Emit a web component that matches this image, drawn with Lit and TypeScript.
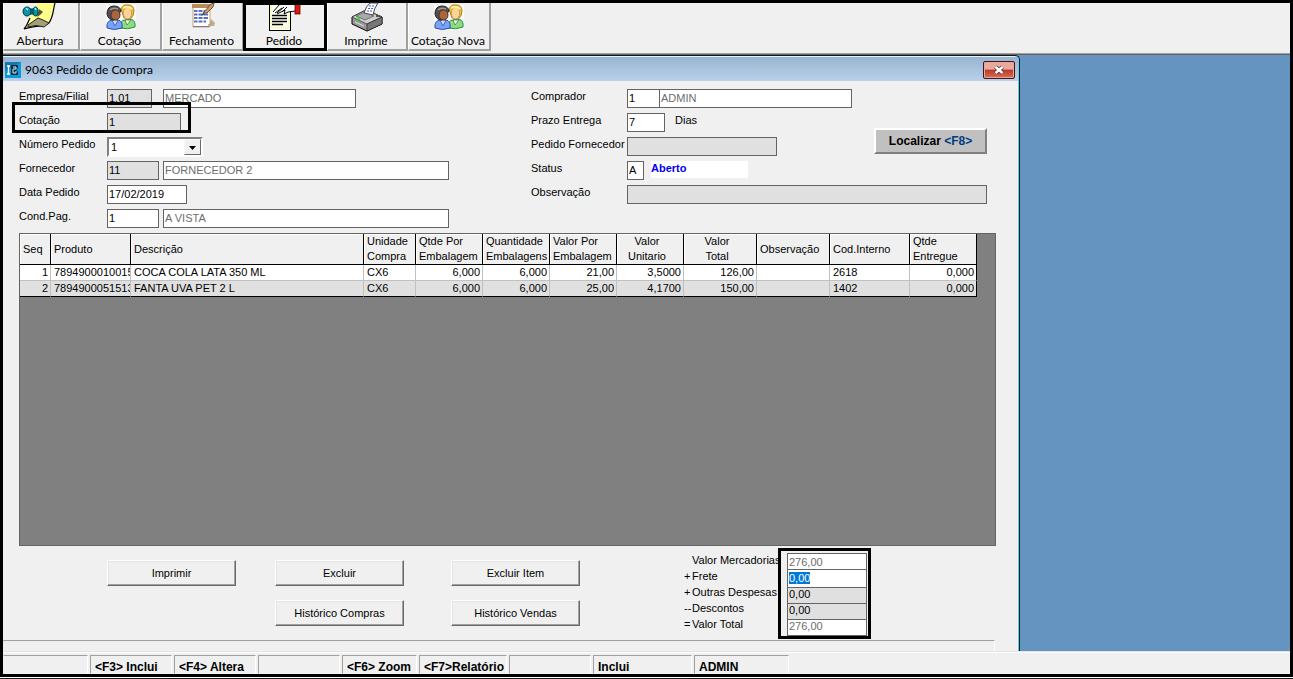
import { LitElement, html, css, svg, nothing } from "lit";
import { customElement, query } from "lit/decorators.js";
import { classMap } from "lit/directives/class-map.js";
import { styleMap } from "lit/directives/style-map.js";

const noteIcon = svg`
  <path d="M14 0H33C31 6 32 12 27 20C24 24 14 22 2 26C5 23 6 19 8 15C11 11 13 7 14 0Z" fill="#ffff8c"/>
  <path d="M33 0C31 6 32 12 27 20C24 24 14 22 2 26C5 23 6 19 8 15" fill="none" stroke="#000" stroke-width="1.2"/>
  <path d="M6 22L16 15L21 17L27 20L22 24Q14 21 6 24Z" fill="#a3a077" stroke="#222" stroke-width="1"/>
  <path d="M17 6l4 3l-3 3l-3 2z" fill="#55553c"/>
  <rect x="6" y="6" width="8" height="5" fill="#008b9a" stroke="#00303c"/>
  <ellipse cx="5" cy="8.500" rx="4" ry="4.500" fill="#0a93a3" stroke="#00303c"/>
  <ellipse cx="13.500" cy="8.500" rx="2.500" ry="4.500" fill="#0a93a3" stroke="#00303c"/>
  <path d="M4 5l2 2M13 5l1 2" stroke="#8ff" stroke-width="1.500"/>`;

const peopleIcon = svg`
  <rect x="0" y="2" width="30" height="25" fill="#fff" opacity=".7"/>
  <path d="M14 25Q14 17 19 17L25 16Q30 18 29 24Q22 27 14 25Z" fill="#8edb84" stroke="#2d8b35"/>
  <path d="M19 17l2 5l4-5z" fill="#fff" stroke="#2d8b35" stroke-width=".8"/>
  <path d="M15 6Q17 1 22 2Q28 2 28 8Q28 13 25 15H18Z" fill="#e8c53f" stroke="#b07c1c"/>
  <ellipse cx="21.500" cy="10" rx="4.200" ry="6" fill="#fbd39b" stroke="#cc8c3c" stroke-width=".8"/>
  <path d="M17 5Q22 2 26 6" stroke="#fff19a" stroke-width="2" fill="none"/>
  <path d="M1 25Q0 18 6 17H12Q17 18 16 25Q8 28 1 25Z" fill="#7aa3f5" stroke="#274fb8"/>
  <path d="M6 17l3 6l3-6z" fill="#cfe4ff" stroke="#274fb8" stroke-width=".8"/>
  <path d="M1 11Q1 3 8 3Q14 3 15 8L8 17Q2 17 1 11Z" fill="#4f4f55" stroke="#222"/>
  <ellipse cx="9.500" cy="12" rx="4.500" ry="5" fill="#a8663b" stroke="#5c2f1a"/>
  <path d="M4 7Q7 4 12 6" stroke="#999" stroke-width="1.500" fill="none"/>`;

const checklistIcon = svg`
  <path d="M20 16l4 4l-1 3h-5z" fill="#b6b083"/>
  <path d="M2 3H19V24H2Z" fill="#fff" stroke="#c9a36a"/>
  <rect x="1" y="1" width="18" height="4" fill="#b88d58"/>
  <path d="M3 8H17M3 11.500H17M3 15H17M3 18.500H15" stroke="#5570c4" stroke-width="2"/>
  <path d="M7 6V21M12 6V21" stroke="#fff"/>
  <path d="M2 23.500H18V21" stroke="#7b7b9d" fill="none"/>
  <path d="M12 10L20 1l3-1l-1 4l-6 6z" fill="#c59b6a" stroke="#6b4a28" stroke-width=".9"/>
  <path d="M12 10l-2 3l4-2z" fill="#333"/>`;

const orderIcon = svg`
  <rect x=".5" y=".5" width="21" height="27" fill="#fffff0" stroke="#000"/>
  <path d="M2 2V26M4 25H20M20 12V25" stroke="#f3ee58" stroke-dasharray="1 1"/>
  <path d="M3 12.500H18M3 15.500H18M3 18.500H18M3 21.500H14" stroke="#000" stroke-width="1.500"/>
  <path d="M4 9L11 1L16 0H26V8L19 9L15 11L16 7L8 11L13 5L6 10Z" fill="#fff"/>
  <path d="M4 9L11 1M6 10L13 5M8 11L16 7L15 11L19 9L26 8M8 10l7-6M13 9l5-5" fill="none" stroke="#000"/>
  <rect x="26" y="1" width="5" height="10" fill="#e01414" stroke="#600" stroke-width=".8"/>`;

const printerIcon = svg`
  <path d="M1 14L15 7L31 14V21L16 28L1 21Z" fill="#989898" stroke="#000"/>
  <path d="M1 14L15 7L31 14L16 21Z" fill="#cfcfcf" stroke="#333" stroke-width=".7"/>
  <path d="M16 21V28L31 21V14Z" fill="#777" stroke="#222" stroke-width=".7"/>
  <path d="M5 13L14 9L23 13L14 17Z" fill="#aaa" stroke="#555" stroke-width=".7"/>
  <path d="M13 10Q15 3 19 0H27Q23 5 22 12Z" fill="#fff" stroke="#445"/>
  <path d="M18 3h5M17 5.500h5M16 8h5" stroke="#4b62dd" stroke-width="1.200" stroke-dasharray="2 1"/>
  <path d="M6 15l3 1.500" stroke="#2e2" stroke-width="2"/>
  <path d="M4 19l9 4" stroke="#ddd"/>
  <path d="M25 13h4" stroke="#555" stroke-width="2"/>`;

const tools = [
  { text: "Abertura", width: 77, icon: noteIcon, viewBox: "1 0 34 28" },
  { text: "Cotação", width: 82, icon: peopleIcon, viewBox: "-3 0 34 28" },
  { text: "Fechamento", width: 82, icon: checklistIcon, viewBox: "-6 0 34 28" },
  { text: "Pedido", width: 83, icon: orderIcon, viewBox: "-2 0 34 28", marked: true },
  { text: "Imprime", width: 81, icon: printerIcon, viewBox: "-2 0 34 28" },
  { text: "Cotação Nova", width: 83, icon: peopleIcon, viewBox: "-3 0 34 28" },
];

const columns = [
  { title: ["Seq"], width: 31, align: "right" },
  { title: ["Produto"], width: 80, align: "left" },
  { title: ["Descrição"], width: 233, align: "left" },
  { title: ["Unidade", "Compra"], width: 52, align: "left" },
  { title: ["Qtde Por", "Embalagem"], width: 67, align: "right" },
  { title: ["Quantidade", "Embalagens"], width: 67, align: "right" },
  { title: ["Valor Por", "Embalagem"], width: 67, align: "right" },
  { title: ["Valor", "Unitario"], width: 67, align: "right", centered: true },
  { title: ["Valor", "Total"], width: 73, align: "right", centered: true },
  { title: ["Observação"], width: 73, align: "left" },
  { title: ["Cod.Interno"], width: 80, align: "left" },
  { title: ["Qtde", "Entregue"], width: 67, align: "right" },
];

const rows = [
  ["1", "7894900010015", "COCA COLA LATA 350 ML", "CX6", "6,000", "6,000", "21,00", "3,5000", "126,00", "", "2618", "0,000"],
  ["2", "7894900051513", "FANTA UVA PET 2 L", "CX6", "6,000", "6,000", "25,00", "4,1700", "150,00", "", "1402", "0,000"],
];

const totals = [
  { id: "mercadorias", sign: "", text: "Valor Mercadorias", value: "276,00", kind: "dim" },
  { id: "frete", sign: "+", text: "Frete", value: "0,00", kind: "edit" },
  { id: "despesas", sign: "+", text: "Outras Despesas", value: "0,00", kind: "locked" },
  { id: "descontos", sign: "--", text: "Descontos", value: "0,00", kind: "locked" },
  { id: "total", sign: "=", text: "Valor Total", value: "276,00", kind: "dim" },
];

const panels = [
  { text: "", width: 85 },
  { text: "<F3> Inclui", width: 82 },
  { text: "<F4> Altera", width: 82 },
  { text: "", width: 82 },
  { text: "<F6> Zoom", width: 75 },
  { text: "<F7>Relatório", width: 88 },
  { text: "", width: 82 },
  { text: "Inclui", width: 99 },
  { text: "ADMIN", width: 95 },
];

@customElement("app-root")
export class AppRoot extends LitElement {
  @query("#frete") private frete!: HTMLInputElement;

  static styles = css`
    :host {
      display: block;
      font: 11px/15px "Liberation Sans", Arial, sans-serif;
      color: #000;
    }
    *, *::before, *::after { box-sizing: border-box; }
    input, button, select { font: inherit; color: inherit; margin: 0; border-radius: 0; }
    .page {
      display: flex;
      flex-direction: column;
      min-height: 100vh;
      background: #f0f0f0;
      border: 3px solid #000;
      border-bottom: 0;
    }
    .toolbar {
      display: flex;
      padding-bottom: 3px;
      border-bottom: 1px solid #646464;
      box-shadow: inset 0 -1px #a0a0a0;
    }
    .tool {
      position: relative;
      display: flex;
      flex-direction: column;
      align-items: center;
      justify-content: space-between;
      height: 48px;
      padding: 0 2px 1px 0;
      border: 0;
      border-left: 1px solid #fff;
      border-right: 2px solid #a0a0a0;
      border-bottom: 2px solid #a0a0a0;
      background: #f0f0f0;
      font: 12px/15px Lato, sans-serif;
      white-space: nowrap;
    }
    .tool svg { width: 34px; height: 28px; display: block; overflow: visible; }
    .marked::after {
      content: "";
      position: absolute;
      inset: -1px -2px -2px -2px;
      border: 3px solid #000;
    }
    .desktop {
      flex: 1;
      display: flex;
      background: #6694c1;
    }
    .window {
      flex: 0 1 1017px;
      min-width: 0;
      display: flex;
      flex-direction: column;
      background: #f0f0f0;
      border-top: 1px solid #101820;
      border-right: 1px solid #101820;
      border-top-right-radius: 5px;
      box-shadow: inset -1px 0 #4fd4f5, inset 0 1px #e6f2fa;
    }
    .title {
      display: flex;
      align-items: center;
      gap: 4px;
      height: 24px;
      margin: 1px 1px 0 0;
      padding: 1px 3px 0 2px;
      background: linear-gradient(#99b4d1, #b9d1ea);
      font: 12px/16px Lato, sans-serif;
    }
    .title h1 { flex: 1; margin: 0; font: inherit; }
    .title .logo { width: 16px; height: 16px; }
    .close {
      width: 32px;
      height: 18px;
      padding: 0;
      display: grid;
      place-items: center;
      border: 1px solid #43141a;
      border-radius: 2px;
      box-shadow: inset 0 0 0 1px #e9a79c;
      background: linear-gradient(#e9a99d 0 45%, #bb3a23 50%, #d5705a);
    }
    .body {
      flex: 1;
      display: flex;
      flex-direction: column;
      padding: 8px 23px 0 16px;
    }
    .form { display: flex; margin-bottom: 5px; }
    .left { flex: 0 0 512px; display: grid; gap: 5px; align-content: start; }
    .right {
      flex: 0 1 456px;
      display: grid;
      grid-template-columns: 1fr 113px;
      grid-auto-rows: 19px;
      gap: 5px 0;
      align-content: start;
    }
    .row { display: flex; height: 19px; position: relative; grid-column: 1; }
    .wide { grid-column: 1 / -1; }
    .row label { width: 88px; white-space: nowrap; flex: none; }
    .right .row label { width: 96px; }
    .field {
      height: 19px;
      min-width: 0;
      padding: 0 1px 1px;
      border: 1px solid #646464;
      background: #fff;
      outline: 0;
    }
    .locked { background: #e0e0e0; }
    .dim { color: #6d6d6d; }
    .w-code { width: 52px; margin-right: 4px; }
    .w-short { width: 45px; margin-right: 11px; }
    .w-name { width: 193px; }
    .w-long { width: 286px; }
    .w-quote { width: 74px; }
    .w-date { width: 80px; }
    .w-buyer { width: 33px; margin-right: -1px; }
    .w-days { width: 38px; margin-right: 10px; }
    .w-order { width: 150px; }
    .w-flag { width: 17px; margin-right: 7px; }
    .grow { flex: 1; }
    .quote::after {
      content: "";
      position: absolute;
      left: -7px;
      top: -11px;
      width: 179px;
      height: 31px;
      border: 3px solid #000;
      pointer-events: none;
    }
    .status {
      width: 97px;
      height: 17px;
      background: #fff;
      color: #0000f0;
      font-weight: bold;
    }
    .combo {
      display: flex;
      position: relative;
      width: 96px;
      height: 20px;
      border: 2px solid;
      border-color: #808080 #fff #fff #808080;
      background: #fff;
    }
    .combo select {
      appearance: none;
      width: 100%;
      border: 0;
      outline: 0;
      padding: 1px 2px 0;
      background: #fff;
    }
    .combo svg {
      position: absolute;
      right: 0;
      top: 0;
      width: 17px;
      height: 16px;
      pointer-events: none;
      background: #f0f0f0;
      border: 1px solid;
      border-color: #f8f8f8 #696969 #696969 #f8f8f8;
    }
    .find {
      grid-column: 2;
      grid-row: 2 / span 2;
      align-self: end;
      height: 26px;
      margin-bottom: 2px;
      border: 2px solid;
      border-color: #fff #808080 #808080 #fff;
      background: #c0c0c0;
      font-size: 12px;
      font-weight: bold;
    }
    .key { color: #003c80; }
    .grid {
      flex: 1;
      background: #808080;
      border: 1px solid #646464;
      overflow: hidden;
    }
    table { table-layout: fixed; border-collapse: separate; border-spacing: 0; width: 957px; }
    th {
      height: 31px;
      padding: 0 0 0 3px;
      border-right: 1px solid #000;
      border-bottom: 1px solid #000;
      box-shadow: inset 1px 1px #fff;
      background: #f0f0f0;
      font-weight: normal;
      text-align: left;
    }
    th.centered { text-align: center; padding: 0 12px 0 6px; }
    th span { display: block; white-space: nowrap; }
    td {
      height: 16px;
      padding: 0 2px 0 3px;
      line-height: 15px;
      background: #fff;
      border-right: 1px solid #c0c0c0;
      border-bottom: 1px solid #c0c0c0;
      overflow: hidden;
      white-space: nowrap;
    }
    td:last-child { border-right-color: #000; }
    tr:last-child td { background: #e0e0e0; border-bottom-color: #000; }
    td.right-text { text-align: right; }
    .footer { display: flex; justify-content: space-between; height: 94px; }
    .actions {
      display: grid;
      grid-template-columns: 168px 176px 129px;
      grid-auto-rows: 26px;
      row-gap: 14px;
      padding: 14px 0 0 88px;
    }
    .actions button {
      width: 129px;
      padding: 0;
      background: #f0f0f0;
      border: 1px solid;
      border-color: #fff #696969 #696969 #fff;
      box-shadow: inset -1px -1px #a0a0a0, inset 1px 1px #e3e3e3;
    }
    .second { grid-column: 2; }
    .totals {
      position: relative;
      display: grid;
      grid-template-columns: 103px 80px;
      grid-auto-rows: 16px;
      align-content: start;
      padding: 7px 0 0;
      margin-right: 129px;
    }
    .totals::after {
      content: "";
      position: absolute;
      z-index: 4;
      right: -4px;
      top: 2px;
      width: 93px;
      height: 91px;
      border: 3px solid #000;
      pointer-events: none;
    }
    .totals label { display: flex; white-space: nowrap; }
    .sign { width: 8px; flex: none; }
    .totals .field { position: relative; width: 80px; }
    .totals .edit { z-index: 3; }
    .totals .edit + label + .field { z-index: 2; }
    .totals .edit + label + .field + label + .field { z-index: 1; }
    .edit::selection { background: #0078d7; color: #fff; }
    .strip {
      height: 11px;
      margin-right: 24px;
      border-top: 1px solid #a0a0a0;
      border-right: 1px solid #fff;
    }
    .statusbar {
      display: flex;
      gap: 2px;
      padding-top: 3px;
      border-top: 1px solid #e3e3e3;
      box-shadow: inset 0 1px #fff;
      font-size: 12px;
      font-weight: bold;
    }
    .panel {
      height: 19px;
      padding: 4px 0 0 4px;
      line-height: 15px;
      white-space: nowrap;
      border: 1px solid;
      border-color: #a0a0a0 #fff transparent #a0a0a0;
    }
    .panel:first-child { border-left-color: transparent; }
    .edge {
      height: 5px;
      margin: 0 -3px;
      background: linear-gradient(#000 0 3px, #fff 3px 4px, #181818 4px);
    }
  `;

  firstUpdated() {
    this.frete.focus();
    this.frete.select();
  }

  private field(id: string, value: string, kind: string, label: string | typeof nothing = nothing) {
    return html`<input id=${id} class="field ${kind}" .value=${value} aria-label=${label} autocomplete="off" />`;
  }

  private toolbar() {
    return html`<nav class="toolbar">
      ${tools.map(
        (t) => html`<button
          class=${classMap({ tool: true, marked: !!t.marked })}
          style=${styleMap({ width: `${t.width}px` })}
        >
          <svg viewBox=${t.viewBox} aria-hidden="true">${t.icon}</svg>
          ${t.text}
        </button>`
      )}
    </nav>`;
  }

  private form() {
    return html`<div class="form">
      <div class="left">
        <div class="row">
          <label for="empresa">Empresa/Filial</label>
          ${this.field("empresa", "1.01", "locked w-short")}
          ${this.field("empresa-nome", "MERCADO", "dim w-name", "Nome da empresa")}
        </div>
        <div class="row quote">
          <label for="cotacao">Cotação</label>
          ${this.field("cotacao", "1", "locked w-quote")}
        </div>
        <div class="row">
          <label for="numero">Número Pedido</label>
          <span class="combo">
            <select id="numero"><option>1</option></select>
            <svg viewBox="0 0 15 14" aria-hidden="true"><path d="M4 6H11L7.500 10Z" /></svg>
          </span>
        </div>
        <div class="row">
          <label for="fornecedor">Fornecedor</label>
          ${this.field("fornecedor", "11", "locked w-code")}
          ${this.field("fornecedor-nome", "FORNECEDOR 2", "dim w-long", "Nome do fornecedor")}
        </div>
        <div class="row">
          <label for="data">Data Pedido</label>
          ${this.field("data", "17/02/2019", "w-date")}
        </div>
        <div class="row">
          <label for="cond">Cond.Pag.</label>
          ${this.field("cond", "1", "w-code")}
          ${this.field("cond-nome", "A VISTA", "dim w-long", "Condição de pagamento")}
        </div>
      </div>
      <div class="right">
        <div class="row wide">
          <label for="comprador">Comprador</label>
          ${this.field("comprador", "1", "w-buyer")}
          ${this.field("comprador-nome", "ADMIN", "dim w-name", "Nome do comprador")}
        </div>
        <div class="row">
          <label for="prazo">Prazo Entrega</label>
          ${this.field("prazo", "7", "w-days")}
          <span>Dias</span>
        </div>
        <div class="row">
          <label for="pedido">Pedido Fornecedor</label>
          ${this.field("pedido", "", "locked w-order")}
        </div>
        <button class="find">Localizar <span class="key">&lt;F8&gt;</span></button>
        <div class="row">
          <label for="status">Status</label>
          ${this.field("status", "A", "w-flag")}
          <output class="status" for="status">Aberto</output>
        </div>
        <div class="row wide">
          <label for="obs">Observação</label>
          ${this.field("obs", "", "locked grow")}
        </div>
      </div>
    </div>`;
  }

  private items() {
    return html`<div class="grid">
      <table>
        <colgroup>
          ${columns.map((c) => html`<col style=${styleMap({ width: `${c.width}px` })} />`)}
        </colgroup>
        <thead>
          <tr>
            ${columns.map(
              (c) => html`<th scope="col" class=${classMap({ centered: !!c.centered })}>
                ${c.title.map((line) => html`<span>${line}</span>`)}
              </th>`
            )}
          </tr>
        </thead>
        <tbody>
          ${rows.map(
            (r) => html`<tr>
              ${r.map((v, i) => html`<td class=${classMap({ "right-text": columns[i].align === "right" })}>${v}</td>`)}
            </tr>`
          )}
        </tbody>
      </table>
    </div>`;
  }

  render() {
    return html`<div class="page">
      ${this.toolbar()}
      <main class="desktop">
        <section class="window">
          <header class="title">
            <svg class="logo" viewBox="0 0 16 16" aria-hidden="true">
              <rect width="16" height="16" fill="#0b9bd8" />
              <path d="M0 0H16L0 9Z" fill="#1479ac" />
              <path d="M2 4H5M3.500 4V12M2 12H5" stroke="#fff" stroke-width="1.300" fill="none" />
              <path d="M6 3H13V6L11 8L13 10V13H6Z" fill="#082b45" />
              <path d="M8 5H11V7H8V11H11V9" stroke="#cfeeff" fill="none" />
            </svg>
            <h1>9063 Pedido de Compra</h1>
            <button class="close" aria-label="Fechar">
              <svg width="12" height="10" viewBox="0 0 12 10" aria-hidden="true">
                <path d="M2.500 2L9.500 8M9.500 2L2.500 8" stroke="#5a3036" stroke-width="4" />
                <path d="M2.500 2L9.500 8M9.500 2L2.500 8" stroke="#fff" stroke-width="2.400" />
              </svg>
            </button>
          </header>
          <div class="body">
            ${this.form()} ${this.items()}
            <div class="footer">
              <div class="actions">
                <button>Imprimir</button>
                <button>Excluir</button>
                <button>Excluir Item</button>
                <button class="second">Histórico Compras</button>
                <button>Histórico Vendas</button>
              </div>
              <div class="totals">
                ${totals.map(
                  (t) => html`<label for=${t.id}><span class="sign">${t.sign}</span>${t.text}</label>
                    ${this.field(t.id, t.value, t.kind)}`
                )}
              </div>
            </div>
          </div>
          <div class="strip"></div>
        </section>
      </main>
      <footer class="statusbar">
        ${panels.map((p) => html`<div class="panel" style=${styleMap({ width: `${p.width}px` })}>${p.text}</div>`)}
      </footer>
      <div class="edge"></div>
    </div>`;
  }
}
